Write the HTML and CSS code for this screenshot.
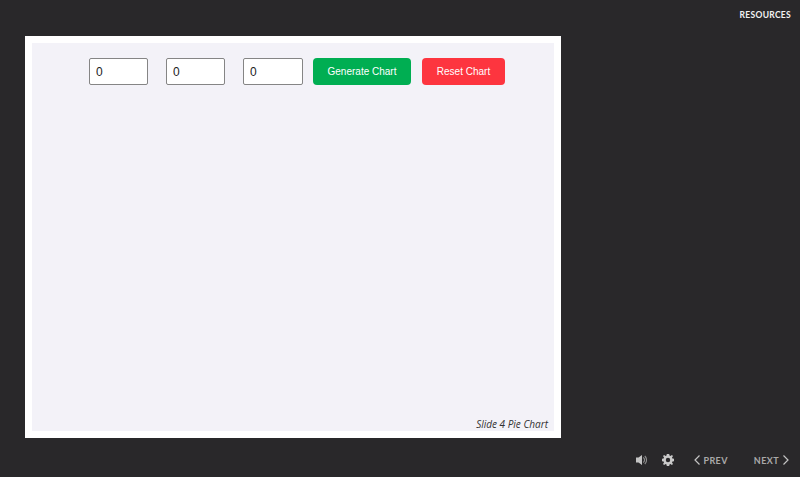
FILE: index.html
```html
<!DOCTYPE html>
<html lang="en">
<head>
  <meta charset="UTF-8">
  <title>Slide 4 Pie Chart</title>
  <link rel="stylesheet" href="styles.css">
</head>
<body>

  <div class="topbar">
    <a class="resources">RESOURCES</a>
  </div>

  <div class="stage">
    <div class="panel">
      <div class="controls">
        <input type="text" class="num" value="0">
        <input type="text" class="num" value="0">
        <input type="text" class="num" value="0">
        <button class="btn btn-go">Generate Chart</button>
        <button class="btn btn-reset">Reset Chart</button>
      </div>
      <div class="caption">Slide 4 Pie Chart</div>
    </div>
  </div>

  <div class="bottombar">
    <svg class="icon sound" width="11" height="10" viewBox="0 0 11 10">
      <path d="M0 2.500h2.500L6 0v10L2.500 7.500H0z" fill="#c4c4c4"/>
      <path d="M7.200 2.500a3 3 0 0 1 0 5M8.800 1a5.500 5.500 0 0 1 0 8" fill="none" stroke="#8e8e8e" stroke-width="1.100"/>
    </svg>
    <svg class="icon gear" width="12" height="12" viewBox="0 0 12 12">
      <path fill="#c9c9c9" fill-rule="evenodd" d="M4.800 0h2.400l.3 1.600 1 .4L9.900 1l1.100 1.100-1 1.400.4 1L12 4.800v2.400l-1.600.3-.4 1 1 1.400L9.900 11l-1.400-1-1 .4L7.200 12H4.800l-.3-1.600-1-.4-1.400 1L1 9.900l1-1.400-.4-1L0 7.200V4.800l1.600-.3.400-1L1 2.100 2.100 1l1.400 1 1-.4zM6 3.800a2.200 2.200 0 1 0 0 4.400 2.200 2.200 0 0 0 0-4.400z"/>
    </svg>
    <span class="nav prev">
      <svg width="6" height="10" viewBox="0 0 6 10"><path d="M5.500 0.500 1 5l4.500 4.500" fill="none" stroke="#c4c4c4" stroke-width="1.200"/></svg>
      PREV
    </span>
    <span class="nav next">
      NEXT
      <svg width="7" height="10" viewBox="0 0 7 10"><path d="M1.500 0.500 6 5 1.500 9.500" fill="none" stroke="#c4c4c4" stroke-width="1.200"/></svg>
    </span>
  </div>

</body>
</html>
```

FILE: styles.css
```css
body {
  background: #29282a;
  font-family: "Lato", sans-serif;
  margin: 0;
  height: 477px;
  overflow: hidden;
}
.topbar {
  height: 36px;
  display: flex;
  justify-content: flex-end;
  padding: 10px 9px 0 0;
  box-sizing: border-box;
}
.resources {
  color: #f2f2f2;
  font-size: 8.500px;
  font-weight: 700;
  letter-spacing: 0.3px;
  line-height: 11px;
}
.stage {
  background: #fff;
  width: 536px;
  height: 402px;
  margin-left: 25px;
  padding: 7px;
  box-sizing: border-box;
}
.panel {
  background: #f3f2f8;
  height: 100%;
  display: flex;
  flex-direction: column;
  justify-content: space-between;
}
.controls {
  display: flex;
  align-items: center;
  padding: 15px 0 0 57px;
}
.num {
  width: 59px;
  height: 27px;
  box-sizing: border-box;
  border: 1px solid #858585;
  border-radius: 2px;
  background: #fff;
  color: #222;
  font-family: "Liberation Sans", sans-serif;
  font-size: 12px;
  padding: 0 6px;
  margin-right: 18px;
}
.num:nth-child(3) {
  width: 60px;
  margin-right: 10px;
}
.btn {
  height: 27px;
  border: none;
  border-radius: 4px;
  color: #fff;
  font-family: "Liberation Sans", sans-serif;
  font-size: 10px;
  padding: 0;
}
.btn-go {
  background: #00ae52;
  width: 98px;
  margin-right: 11px;
}
.btn-reset {
  background: #fd353f;
  width: 83px;
}
.caption {
  font-family: "Open Sans", sans-serif;
  font-style: italic;
  font-size: 10px;
  line-height: 14px;
  color: #333;
  text-align: right;
  padding: 0 6px 0 0;
}
.bottombar {
  height: 39px;
  display: flex;
  align-items: center;
  justify-content: flex-end;
  padding: 5px 11px 0 0;
  box-sizing: border-box;
  color: #a9a9a9;
  font-size: 9px;
  font-weight: 700;
  letter-spacing: 0.4px;
}
.sound {
  margin-right: 15px;
}
.gear {
  margin-right: 20px;
}
.nav {
  display: flex;
  align-items: center;
  gap: 3px;
}
.prev {
  margin-right: 26px;
}
```
